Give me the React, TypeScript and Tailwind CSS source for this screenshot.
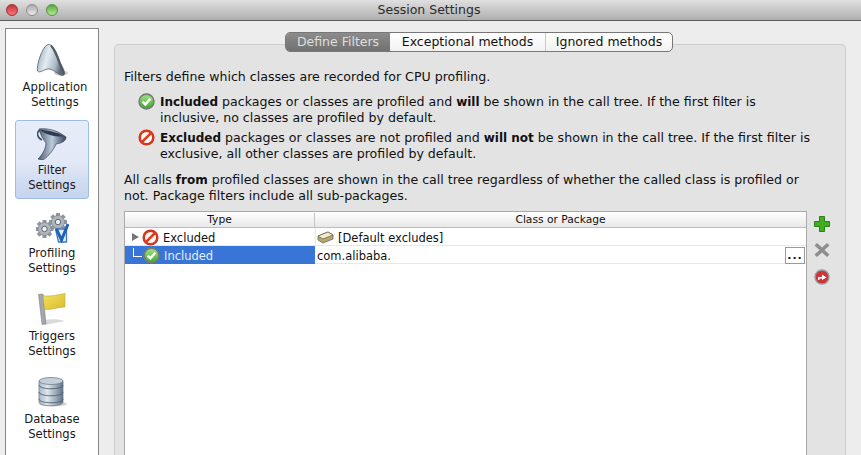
import React from "react";

function CheckIcon({ size = 17 }: { size?: number }) {
  return (
    <svg width={size} height={size} viewBox="0 0 17 17" className="shrink-0">
      <defs>
        <linearGradient id="ok" x1="0" y1="0" x2="0" y2="1">
          <stop offset="0" stopColor="#a6e388" />
          <stop offset="1" stopColor="#3aa82c" />
        </linearGradient>
      </defs>
      <circle cx="8.5" cy="8.5" r="7.4" fill="url(#ok)" stroke="#717c72" strokeWidth="1.6" />
      <path d="M4.6 8.6 L7.4 11.4 L12.4 5.6" fill="none" stroke="#fff" strokeWidth="2.4" />
    </svg>
  );
}

function BanIcon({ size = 17 }: { size?: number }) {
  return (
    <svg width={size} height={size} viewBox="0 0 17 17" className="shrink-0">
      <circle cx="8.5" cy="8.5" r="6.8" fill="#fbf6f2" stroke="#d6341b" strokeWidth="2.5" />
      <path d="M3.6 13.4 L13.4 3.6" stroke="#dc3d20" strokeWidth="2.7" />
    </svg>
  );
}

function AppIcon() {
  return (
    <svg width="32" height="33" viewBox="0 0 32 33">
      <defs>
        <linearGradient id="app" x1="0" y1="0" x2="1" y2="0.3">
          <stop offset="0" stopColor="#8da2b4" />
          <stop offset="0.45" stopColor="#e4ecf2" />
          <stop offset="0.8" stopColor="#a9b8c4" />
          <stop offset="1" stopColor="#5e6a76" />
        </linearGradient>
      </defs>
      <ellipse cx="25" cy="29" rx="7" ry="2.5" fill="#cfcfcf" />
      <path d="M12 0.5 C16 0 20 6 23 15 C25 22 30 27 28 31 C24 33 20 27 14 25 C9 24 4 30 1.5 27 C0 23 6 2 12 0.5 Z" fill="url(#app)" stroke="#56616c" strokeWidth="0.8" />
      <path d="M15 1.5 C19 6 22 15 24 20 C25 24 28 27 27.5 30.5" fill="none" stroke="#4f5a65" strokeWidth="2" />
    </svg>
  );
}

function FunnelIcon() {
  return (
    <svg width="30" height="32" viewBox="0 0 30 32">
      <defs>
        <linearGradient id="fun" x1="0" y1="0" x2="1" y2="0">
          <stop offset="0" stopColor="#4a5a72" />
          <stop offset="0.5" stopColor="#bccadb" />
          <stop offset="1" stopColor="#33415a" />
        </linearGradient>
      </defs>
      <path d="M3 2 C-1 4 0 10 5 12" fill="none" stroke="#3f4d63" strokeWidth="1.6" />
      <path d="M2 1 C10 0 20 2 29 9 C29 13 25 15 19 16 C17 21 12 28 6 32 L1 31 C6 26 9 20 9 15 C6 11 3 6 2 1 Z" fill="url(#fun)" stroke="#39465b" strokeWidth="0.7" />
      <path d="M3 2 C10 2 20 4 27 8.5 C19 9 9 7 3 2 Z" fill="#2f3b4e" />
    </svg>
  );
}

function GearsIcon() {
  const teeth = [0, 45, 90, 135];
  const gear = (cx: number, cy: number, r: number) => (
    <g>
      {teeth.map((a) => (
        <rect key={a} x={cx - 2} y={cy - r - 2.5} width="4" height={2 * r + 5} fill="#8f969e" transform={`rotate(${a} ${cx} ${cy})`} />
      ))}
      <circle cx={cx} cy={cy} r={r} fill="#b0b6bc" stroke="#80878f" strokeWidth="0.8" />
      <circle cx={cx} cy={cy} r={r * 0.42} fill="#eef0f2" stroke="#5f656d" strokeWidth="1" />
    </g>
  );
  return (
    <svg width="33" height="30" viewBox="0 0 33 30">
      {gear(8.5, 16, 6.5)}
      {gear(22, 9, 6.5)}
      <path d="M19.5 16 H30.5 V29 H22.5 Z" fill="#e4eef8" stroke="#3a78bd" strokeWidth="1.3" />
      <path d="M20.5 16 L25.5 27 L32 11" fill="none" stroke="#1f63b3" strokeWidth="3" />
    </svg>
  );
}

function FlagIcon() {
  return (
    <svg width="28" height="32" viewBox="0 0 28 32">
      <defs>
        <linearGradient id="flag" x1="0" y1="0" x2="1" y2="1">
          <stop offset="0" stopColor="#f4e15f" />
          <stop offset="1" stopColor="#d8bb2e" />
        </linearGradient>
      </defs>
      <path d="M7 32 L27 28 C21 26 13 26 7 27 Z" fill="#d9d9d9" />
      <path d="M0.5 1.5 L5 1 L8 31 L4 31.5 Z" fill="#a3a7ab" stroke="#777" strokeWidth="0.5" />
      <path d="M5 2.5 C11 4 18 2 27 0.5 L27 14 C20 14 14 17 6.5 16.5 Z" fill="url(#flag)" stroke="#b9a12b" strokeWidth="0.5" />
    </svg>
  );
}

function DatabaseIcon() {
  const bands = [6, 13, 20];
  return (
    <svg width="29" height="30" viewBox="0 0 29 30">
      <defs>
        <linearGradient id="db" x1="0" y1="0" x2="1" y2="0">
          <stop offset="0" stopColor="#a7b8c6" />
          <stop offset="0.35" stopColor="#dfe7ed" />
          <stop offset="1" stopColor="#62758a" />
        </linearGradient>
      </defs>
      <ellipse cx="15" cy="27" rx="14" ry="2.5" fill="#d4d4d4" />
      <path d="M1 4 V25 C1 30 25 30 25 25 V4 Z" fill="url(#db)" stroke="#65727e" strokeWidth="0.7" />
      {bands.map((y) => (
        <path key={y} d={`M1 ${y + 2} C1 ${y + 7} 25 ${y + 7} 25 ${y + 2}`} fill="none" stroke="#4f6070" strokeWidth="0.9" />
      ))}
      <ellipse cx="13" cy="4" rx="12" ry="3.5" fill="#c3d0da" stroke="#65727e" strokeWidth="0.7" />
    </svg>
  );
}

function SideItem({ icon, label, className, labelClass }: { icon: React.ReactNode; label: string; className: string; labelClass: string }) {
  return (
    <div className={`flex w-[74px] shrink-0 flex-col items-center justify-end ${className}`}>
      {icon}
      <div className={`text-center text-[11.6px] leading-[15px] text-[#1a1a1a] ${labelClass}`}>
        {label}
        <br />
        Settings
      </div>
    </div>
  );
}

function Tab({ label, active, divider }: { label: string; active?: boolean; divider?: boolean }) {
  return (
    <div className={`flex h-full items-center justify-center ${active ? "bg-gradient-to-b from-[#8c8c8c] to-[#6f6f6f] text-[#dedede]" : "text-[#111]"} ${divider ? "border-r border-[#c8c8c8]" : ""}`}>
      {label}
    </div>
  );
}

function B({ children }: { children: React.ReactNode }) {
  return <b className="text-[12px]">{children}</b>;
}

export default function App() {
  return (
    <div className="flex h-[455px] w-[861px] flex-col overflow-hidden bg-[#ededed] font-['DejaVu_Sans',sans-serif] text-[12.6px] text-[#111]">
      {/* title bar */}
      <div className="relative flex h-[21px] shrink-0 items-center justify-center border-b border-[#5c5c5c] bg-gradient-to-b from-[#e0e0e0] to-[#afafaf] pr-[3px] text-[12.5px] text-[#2a2a2a]">
        <div className="absolute left-[6px] top-[4px] flex gap-[8px]">
          <div className="h-[12px] w-[12px] rounded-full border border-[#9c2f33] bg-gradient-to-b from-[#c62f36] to-[#f3787c]" />
          <div className="h-[12px] w-[12px] rounded-full border border-[#8c8c8c] bg-gradient-to-b from-[#a9a9a9] to-[#ececec]" />
          <div className="h-[12px] w-[12px] rounded-full border border-[#55913f] bg-gradient-to-b from-[#57a63f] to-[#b6e898]" />
        </div>
        Session Settings
      </div>

      <div className="flex min-h-0 flex-1 pt-[7px]">
        {/* left nav */}
        <div className="ml-[5px] flex w-[94px] shrink-0 flex-col items-center border border-b-0 border-[#8a8a8a] bg-white pt-[14px]">
          <SideItem className="h-[77px] pb-[10px]" labelClass="mt-[3px] ml-[6px]" icon={<AppIcon />} label="Application" />
          <SideItem className="h-[79px] rounded-[3px] border border-[#9fbce4] bg-gradient-to-b from-[#e6ecf8] via-[#e3e9f7] to-[#c5d3ee] pb-[5px]" labelClass="mt-[3px]" icon={<FunnelIcon />} label="Filter" />
          <SideItem className="h-[83px] pb-[6px]" labelClass="mt-[3px]" icon={<GearsIcon />} label="Profiling" />
          <SideItem className="h-[83px] pb-[6px]" labelClass="mt-[4px]" icon={<FlagIcon />} label="Triggers" />
          <SideItem className="h-[83px] pb-[6px]" labelClass="mt-[5px]" icon={<DatabaseIcon />} label="Database" />
        </div>

        {/* main panel */}
        <div className="ml-[15px] flex w-[732px] shrink-0 flex-col pt-[4px]">
          <div className="relative z-10 -mb-[8px] flex justify-center pr-[2px]">
            <div className="grid h-[20px] w-[388px] grid-cols-[104px_156px_1fr] items-center overflow-hidden rounded-[5px] border border-[#777] bg-gradient-to-b from-white to-[#f2f2f2] text-[12.5px]">
              <Tab active label="Define Filters" />
              <Tab divider label="Exceptional methods" />
              <Tab label="Ignored methods" />
            </div>
          </div>
          <div className="flex min-h-0 flex-1 flex-col rounded-t-[5px] border border-b-0 border-[#cdcdcd] bg-[#e3e3e3] pl-[9px] pr-[15px] pt-[24px] leading-[16px]">
            <p className="whitespace-nowrap">Filters define which classes are recorded for CPU profiling.</p>
            <div className="ml-[14px] mt-[8px] flex gap-[5px]">
              <CheckIcon />
              <p className="mt-[1px] whitespace-nowrap">
                <B>Included</B> packages or classes are profiled and <B>will</B> be shown in the call tree. If the first filter is
                <br />
                inclusive, no classes are profiled by default.
              </p>
            </div>
            <div className="ml-[14px] mt-[3px] flex gap-[5px]">
              <BanIcon />
              <p className="mt-[1px] whitespace-nowrap">
                <B>Excluded</B> packages or classes are not profiled and <B>will not</B> be shown in the call tree. If the first filter is
                <br />
                exclusive, all other classes are profiled by default.
              </p>
            </div>
            <p className="mt-[10px] whitespace-nowrap">
              All calls <B>from</B> profiled classes are shown in the call tree regardless of whether the called class is profiled or
              <br />
              not. Package filters include all sub-packages.
            </p>

            <div className="mt-[7px] flex min-h-0 flex-1 gap-[7px]">
              {/* filter table */}
              <div className="min-w-0 flex-1 border border-b-0 border-[#a9a9a9] bg-white text-[11.5px]">
                <div className="grid h-[16px] grid-cols-[190px_1fr] border-b border-[#bdbdbd] bg-gradient-to-b from-white to-[#e8e8e8] pt-[1px] text-[10.7px] leading-[14px]">
                  <div className="border-r border-[#c5c5c5] text-center">Type</div>
                  <div className="text-center">Class or Package</div>
                </div>
                <div className="grid h-[18px] grid-cols-[190px_1fr] border-b border-[#e8e8e8]">
                  <div className="flex items-center pl-[7px]">
                    <div className="h-0 w-0 border-y-[4px] border-l-[7px] border-y-transparent border-l-[#777]" />
                    <div className="ml-[3px]"><BanIcon /></div>
                    <span className="ml-[4px] pt-[2px]">Excluded</span>
                  </div>
                  <div className="flex items-center border-l border-[#e8e8e8] pl-[1px]">
                    <svg width="17" height="13" viewBox="0 0 17 13">
                      <path d="M1 5 L11 1 L16 4 L16 8 L6 12 L1 9 Z" fill="#b9a66d" stroke="#6d6654" strokeWidth="0.8" />
                      <path d="M1 5 L11 1 L16 4 L6 8 Z" fill="#f3ebc8" stroke="#6d6654" strokeWidth="0.8" />
                    </svg>
                    <span className="ml-[4px] pt-[2px]">[Default excludes]</span>
                  </div>
                </div>
                <div className="grid h-[18px] grid-cols-[190px_1fr] border-b border-[#e8e8e8]">
                  <div className="flex items-center bg-[#3875d7] pl-[7px] text-[#e6eefb]">
                    <div className="mb-[6px] ml-[1px] h-[9px] w-[9px] border-b border-l border-white" />
                    <div className="ml-[1px]"><CheckIcon /></div>
                    <span className="ml-[4px] pt-[2px]">Included</span>
                  </div>
                  <div className="flex items-center justify-between pl-[2px] pr-[1px]">
                    <span className="pt-[2px]">com.alibaba.</span>
                    <div className="flex h-[17px] w-[20px] items-center justify-center border border-[#999] bg-white pt-[2px] text-[11px] font-bold tracking-[1px]">...</div>
                  </div>
                </div>
              </div>

              {/* add / remove buttons */}
              <div className="flex w-[16px] shrink-0 flex-col items-center gap-[10px] pt-[5px]">
                <svg width="16" height="16" viewBox="0 0 16 16">
                  <path d="M5.5 0.5 H10.5 V5.5 H15.5 V10.5 H10.5 V15.5 H5.5 V10.5 H0.5 V5.5 H5.5 Z" fill="#42ad1f" stroke="#2d7f16" />
                </svg>
                <svg width="16" height="16" viewBox="0 0 16 16">
                  <path d="M3 1 L8 5.5 L13 1 L15.5 3.5 L10.5 8 L15.5 12.5 L13 15 L8 10.5 L3 15 L0.5 12.5 L5.5 8 L0.5 3.5 Z" fill="#8e8e8e" />
                </svg>
                <svg width="16" height="16" viewBox="0 0 16 16" className="mt-[1px]">
                  <circle cx="8" cy="8" r="7" fill="#c8363c" stroke="#9a9a9a" strokeWidth="1.4" />
                  <path d="M4 8 H8 V5.5 L12.5 8.5 L8 11 V9.5 H5.5 V11 H4 Z" fill="#fff" />
                </svg>
              </div>
            </div>
          </div>
        </div>
      </div>
    </div>
  );
}
